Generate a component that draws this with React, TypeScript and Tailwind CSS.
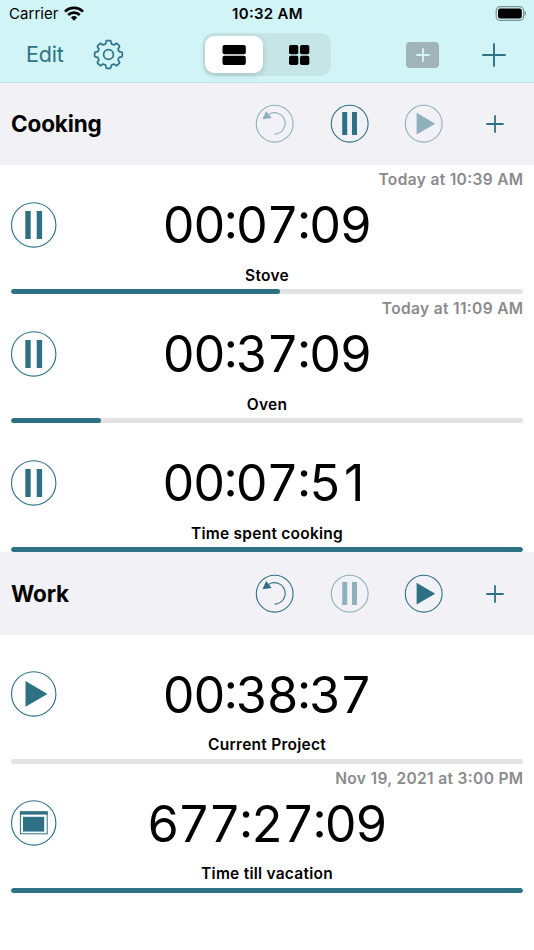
import type { ReactNode } from 'react';

type IconName = 'pause' | 'play' | 'window';

interface Timer {
  name: string;
  time: string;
  icon: IconName;
  due?: string;
  progress: number;
}

interface Group {
  title: string;
  running: boolean;
  timers: Timer[];
}

const groups: Group[] = [
  {
    title: 'Cooking',
    running: true,
    timers: [
      { name: 'Stove', time: '00:07:09', icon: 'pause', due: 'Today at 10:39 AM', progress: 52.5 },
      { name: 'Oven', time: '00:37:09', icon: 'pause', due: 'Today at 11:09 AM', progress: 17.6 },
      { name: 'Time spent cooking', time: '00:07:51', icon: 'pause', progress: 100 },
    ],
  },
  {
    title: 'Work',
    running: false,
    timers: [
      { name: 'Current Project', time: '00:38:37', icon: 'play', progress: 0 },
      { name: 'Time till vacation', time: '677:27:09', icon: 'window', due: 'Nov 19, 2021 at 3:00 PM', progress: 100 },
    ],
  },
];

export default function App() {
  return (
    <div className="flex h-[950px] w-[534px] flex-col overflow-hidden bg-white font-['Inter',sans-serif] text-black [font-feature-settings:'calt'_1]">
      <header className="h-[83px] shrink-0 border-b border-[#c3dfe2] bg-[#d1f4f6]">
        <StatusBar />
        <Toolbar />
      </header>
      <main>
        {groups.map((group) => (
          <section key={group.title} className="group">
            <GroupHeader group={group} />
            {group.timers.map((timer) => (
              <TimerRow key={timer.name} timer={timer} />
            ))}
          </section>
        ))}
      </main>
    </div>
  );
}

function StatusBar() {
  return (
    <div className="grid h-[27px] grid-cols-[1fr_auto_1fr] items-center pr-[8px] pl-[9px]">
      <div className="flex items-center gap-[5px]">
        <span className="pt-[2px] text-[15px] tracking-[0.05px]">Carrier</span>
        <svg width="20" height="15" viewBox="0 0 20 15" fill="none" stroke="#000" strokeWidth="2.7">
          <path d="M1 5.6a12.7 12.7 0 0 1 18 0" />
          <path d="M4.2 9a8.2 8.2 0 0 1 11.6 0" />
          <path d="M10 14.7 6.9 11.5a4.5 4.5 0 0 1 6.2 0z" fill="#000" stroke="none" />
        </svg>
      </div>
      <span className="pt-[2px] text-[15px] font-semibold tracking-[0.3px] whitespace-nowrap">10:32 AM</span>
      <svg className="justify-self-end" width="32" height="16" viewBox="0 0 32 16">
        <rect x="2.2" y="0.7" width="27.4" height="13.6" rx="3.8" fill="none" stroke="#7c9293" strokeWidth="1.2" />
        <rect x="4" y="2.5" width="23.8" height="10" rx="2.2" />
        <path d="M30.6 5.1c2.1.6 2.1 4.2 0 4.8z" fill="#7c9293" />
      </svg>
    </div>
  );
}

function Toolbar() {
  return (
    <div className="flex h-[55px] items-center text-[#2f7286]">
      <button type="button" className="ml-[26px] w-[67px] text-left text-[21.5px] tracking-[-0.15px]">
        Edit
      </button>
      <button type="button" aria-label="Settings">
        <GearIcon />
      </button>
      <div className="ml-[79px] flex h-[43px] w-[128px] items-center rounded-[11px] bg-[#c5e5e7] pl-[2px]">
        <div className="grid h-[37px] w-[58px] place-items-center rounded-[9px] bg-white shadow-[0_2px_6px_rgba(0,0,0,0.15)]">
          <svg width="24" height="20" viewBox="0 0 24 20">
            <rect x="0.5" width="23.3" height="9.2" rx="2" />
            <rect x="0.5" y="10.8" width="23.3" height="9.2" rx="2" />
          </svg>
        </div>
        <svg className="ml-[26px]" width="21" height="20" viewBox="0 0 21 20">
          <rect width="9.3" height="9.2" rx="1.8" />
          <rect x="11" width="9.3" height="9.2" rx="1.8" />
          <rect y="10.8" width="9.3" height="9.2" rx="1.8" />
          <rect x="11" y="10.8" width="9.3" height="9.2" rx="1.8" />
        </svg>
      </div>
      <div className="ml-[75px] grid h-[26px] w-[33px] place-items-center rounded-[4px] bg-[#a1b5b8] text-[#d1f4f6]">
        <PlusIcon size={14} weight={1.9} />
      </div>
      <button type="button" aria-label="Add group" className="ml-[43px]">
        <PlusIcon size={24} weight={1.9} />
      </button>
    </div>
  );
}

function GroupHeader({ group }: { group: Group }) {
  return (
    <div className="flex h-[83px] items-center bg-[#f2f1f6] text-[#2f7184] group-first:h-[82px]">
      <h2 className="ml-[11px] w-[244px] text-[22.5px] font-bold tracking-[-0.15px] text-black">{group.title}</h2>
      <div className="flex gap-[35.3px]">
        <HeaderButton disabled={group.running}>
          <ResetIcon />
        </HeaderButton>
        <HeaderButton disabled={!group.running}>
          <rect x="12.2" y="8" width="5" height="23" fill="currentColor" />
          <rect x="22" y="8" width="5" height="23" fill="currentColor" />
        </HeaderButton>
        <HeaderButton disabled={group.running}>
          <path d="M12.6 8.8v21.8l18.6-10.9z" fill="currentColor" />
        </HeaderButton>
      </div>
      <button type="button" aria-label="Add timer" className="ml-[42px]">
        <PlusIcon size={18} weight={1.8} />
      </button>
    </div>
  );
}

function HeaderButton({ disabled, children }: { disabled: boolean; children: ReactNode }) {
  return (
    <button type="button" disabled={disabled} className="h-[39.4px] w-[39.4px] disabled:opacity-50">
      <svg width="39.4" height="39.4" viewBox="0 0 39.4 39.4" fill="none">
        <circle cx="19.7" cy="19.7" r="18.4" stroke="currentColor" strokeWidth="1.1" />
        {children}
      </svg>
    </button>
  );
}

function TimerRow({ timer }: { timer: Timer }) {
  return (
    <article className="flex h-[129px] flex-col pr-[11px] pl-[10px]">
      <div className="-mr-[0.5px] h-[30px] text-right text-[15.5px] leading-[30px] font-semibold tracking-[0.35px] text-[#8a8a8d]">
        {timer.due}
      </div>
      <div className="grid h-[60px] grid-cols-[47px_1fr_47px] items-center">
        <TimerIcon name={timer.icon} />
        <TimeDisplay time={timer.time} />
      </div>
      <div className="h-[34px] pt-[10px] pl-px text-center text-[15.5px] leading-[21px] font-semibold tracking-[0.25px] group-last:pt-[9px]">
        {timer.name}
      </div>
      <div className="ml-px h-[5px] overflow-hidden rounded-full bg-[#e3e3e3]">
        <div className="h-full rounded-full bg-[#2f7184]" style={{ width: `${timer.progress}%` }} />
      </div>
    </article>
  );
}

function TimeDisplay({ time }: { time: string }) {
  // The tabular "1" has a foot, so it is set in its proportional form in a digit-wide cell
  return (
    <div className="text-center text-[50px] leading-[60px] tracking-[-1.65px] whitespace-nowrap [font-feature-settings:'calt'_1,'tnum'_1]">
      {time.split(/(1)/).map((part, index) =>
        part === '1' ? (
          <span
            key={index}
            className="inline-block w-[31px] pr-[2px] text-center tracking-normal [font-feature-settings:'tnum'_0]"
          >
            1
          </span>
        ) : (
          part
        ),
      )}
    </div>
  );
}

function TimerIcon({ name }: { name: IconName }) {
  return (
    <svg width="47" height="47" viewBox="0 0 47 47" className="text-[#2f7184] group-last:-mt-px" fill="none">
      <circle cx="23.7" cy="22.9" r="22.2" stroke="currentColor" strokeWidth="1.1" />
      {name === 'pause' && (
        <path d="M15.3 9h5.4v28h-5.4zM26.7 9h5.4v28h-5.4z" fill="currentColor" />
      )}
      {name === 'play' && <path d="M15.5 10v25.8L37.5 23z" fill="currentColor" />}
      {name === 'window' && (
        <>
          <rect x="10.4" y="12" width="26.8" height="21.8" stroke="currentColor" strokeWidth="1" />
          <path d="M9.9 11.3h27.8v3.3H9.9z" fill="currentColor" />
          <path d="M13 16.8h21.2v14.8H13z" fill="currentColor" />
        </>
      )}
    </svg>
  );
}

function ResetIcon() {
  return (
    <>
      <path d="M14 10.2a10.7 10.7 0 1 1 5.7 19.9" stroke="currentColor" strokeWidth="1.1" />
      <path d="M7.4 15.2 11.2 7l5.4 7z" fill="currentColor" />
    </>
  );
}

function PlusIcon({ size, weight }: { size: number; weight: number }) {
  return (
    <svg width={size} height={size} viewBox={`0 0 ${size} ${size}`} stroke="currentColor" strokeWidth={weight} strokeLinecap="round">
      <path d={`M${size / 2} 1v${size - 2}M1 ${size / 2}h${size - 2}`} />
    </svg>
  );
}

// Eight rounded teeth around a circular body, one step per 45 degrees
function gearOutline() {
  const at = (deg: number, r: number) => {
    const rad = (deg * Math.PI) / 180;
    return `${(15.5 + r * Math.sin(rad)).toFixed(2)} ${(15.5 - r * Math.cos(rad)).toFixed(2)}`;
  };
  let d = `M${at(-7, 13.9)}`;
  for (let a = 0; a < 360; a += 45) {
    d += `L${at(a + 7, 13.9)}Q${at(a + 11, 13.9)} ${at(a + 12, 12.4)}`;
    d += `Q${at(a + 13, 11)} ${at(a + 18, 10.9)}L${at(a + 27, 10.9)}`;
    d += `Q${at(a + 32, 11)} ${at(a + 33, 12.4)}Q${at(a + 34, 13.9)} ${at(a + 38, 13.9)}`;
  }
  return `${d}Z`;
}

function GearIcon() {
  return (
    <svg width="31" height="31" viewBox="0 0 31 31" fill="none" stroke="currentColor" strokeWidth="1.7" strokeLinejoin="round">
      <path d={gearOutline()} />
      <circle cx="15.5" cy="15.5" r="4.9" />
    </svg>
  );
}
